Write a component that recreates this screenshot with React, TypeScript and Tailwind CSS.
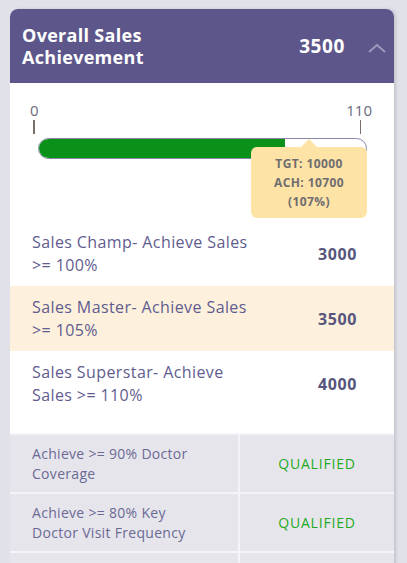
import React from 'react';

const tiers = [
  { label: 'Sales Champ- Achieve Sales >= 100%', value: '3000', active: false },
  { label: 'Sales Master- Achieve Sales >= 105%', value: '3500', active: true },
  { label: 'Sales Superstar- Achieve Sales >= 110%', value: '4000', active: false },
];

const conditions = [
  { label: 'Achieve >= 90% Doctor Coverage', status: 'QUALIFIED' },
  { label: 'Achieve >= 80% Key Doctor Visit Frequency', status: 'QUALIFIED' },
  { label: '', status: '' },
];

const App = () => {
  return (
    <div className="h-[563px] overflow-hidden bg-[#e0e1e9] pt-[9px] font-['Open_Sans',sans-serif]">
      <div className="ml-[10px] w-[384px] overflow-hidden rounded-t-lg bg-white shadow-[2px_0_3px_rgba(0,0,0,0.12)]">
        <div className="flex h-[74px] items-center bg-[#5d568b] pl-3 pr-[7px]">
          <p className="w-[180px] text-[18px] font-bold leading-[22px] tracking-[0.3px] text-white">
            Overall Sales Achievement
          </p>
          <p className="ml-auto text-[19px] font-bold tracking-[0.6px] text-white">3500</p>
          <svg className="ml-[22px] mt-1" width="20" height="12" viewBox="0 0 20 12" fill="none">
            <path d="M2 10 L10 3 L18 10" stroke="#9d98bd" strokeWidth="2" />
          </svg>
        </div>

        <div className="px-[20px] pt-[17px]">
          <div className="flex justify-between text-[15px] leading-[20px] text-[#6b6a7e]">
            <span>0</span>
            <span className="mr-[2px]">110</span>
          </div>
          <div className="flex justify-between">
            <div className="ml-[3px] h-[14px] w-[1.5px] bg-[#7a6f6a]"></div>
            <div className="mr-[13px] h-[14px] w-[1.5px] bg-[#7a6f6a]"></div>
          </div>
          <div className="relative ml-[8px] mt-[4px] h-[21px] w-[329px]">
            <div className="h-full overflow-hidden rounded-full border border-[#8a86a8] bg-white">
              <div className="h-full w-[246px] bg-[#0a911a]"></div>
            </div>
            <div className="absolute left-[213px] top-[9px] w-[116px] rounded-md bg-[#fee3a6] py-[7px] text-center text-[12px] font-bold leading-[19px] tracking-[0.4px] text-[#6e6d70]">
              <div className="absolute left-[50px] top-[-8px] h-0 w-0 border-x-[8px] border-b-[8px] border-x-transparent border-b-[#fee3a6]"></div>
              <p>TGT: 10000</p>
              <p>ACH: 10700</p>
              <p>(107%)</p>
            </div>
          </div>
        </div>

        <div className="mt-[62px] pb-[17px]">
          {tiers.map((t) => (
            <div
              key={t.value}
              className={`flex h-[65px] items-center pl-[22px] pr-[37px] ${t.active ? 'bg-[#fdf0dc]' : ''}`}
            >
              <p className="w-[235px] text-[16px] leading-[23px] tracking-[0.4px] text-[#5f5c8f]">{t.label}</p>
              <p className="ml-auto text-[16px] font-bold tracking-[0.6px] text-[#57557c]">{t.value}</p>
            </div>
          ))}
        </div>

        <div className="bg-[#e7e5ec]">
          {conditions.map((c, i) => (
            <div key={i} className="flex h-[59px] border-t-2 border-[#f4f3f7]">
              <div className="flex w-[230px] items-center border-r-2 border-[#f4f3f7] pl-[22px] pr-2">
                <p className="max-w-[170px] text-[14px] leading-[20px] tracking-[0.3px] text-[#6a6a94]">{c.label}</p>
              </div>
              <div className="flex flex-1 items-center justify-center">
                <p className="text-[14px] tracking-[0.8px] text-[#1eaa1e]">{c.status}</p>
              </div>
            </div>
          ))}
        </div>
      </div>
    </div>
  );
};

export default App;
